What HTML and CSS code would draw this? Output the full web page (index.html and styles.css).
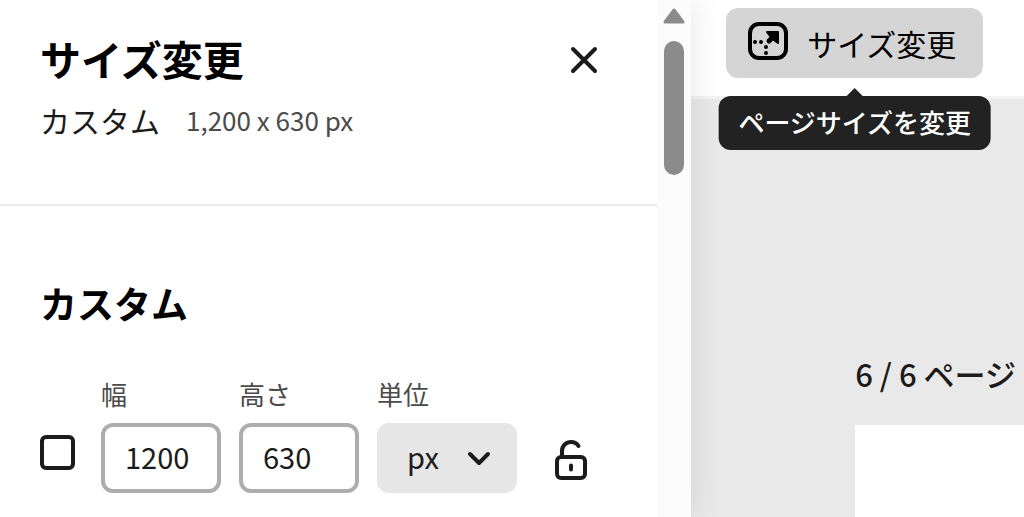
FILE: index.html
```html
<!DOCTYPE html>
<html lang="ja">
<head>
<meta charset="UTF-8" />
<meta name="viewport" content="width=device-width, initial-scale=1" />
<title>サイズ変更</title>
<link rel="stylesheet" href="styles.css">
</head>
<body>

<div class="app">

  <!-- Resize panel -->
  <aside class="panel">
    <div class="panel-content">
      <header class="panel-header">
        <div>
          <h1>サイズ変更</h1>
          <p class="current"><span>カスタム</span><span class="dims">1,200 x 630 px</span></p>
        </div>
        <button class="icon-btn" type="button" aria-label="閉じる">
          <svg width="28" height="28" viewBox="0 0 28 28" fill="none" stroke="#1b1b1b" stroke-width="4" stroke-linecap="round"><path d="M3 3L25 25M25 3L3 25"/></svg>
        </button>
      </header>

      <form class="custom">
        <h2>カスタム</h2>
        <div class="fields">
          <input class="check" type="checkbox" aria-label="カスタム" />
          <div class="field">
            <label for="width">幅</label>
            <input id="width" type="text" value="1200" />
          </div>
          <div class="field">
            <label for="height">高さ</label>
            <input id="height" type="text" value="630" />
          </div>
          <div class="field unit">
            <label for="unit">単位</label>
            <select id="unit"><option>px</option></select>
            <svg class="chevron" width="24" height="16" viewBox="0 0 24 16" fill="none" stroke="#1b1b1b" stroke-width="4" stroke-linecap="round" stroke-linejoin="round"><path d="M3 3L12 12L21 3"/></svg>
          </div>
          <button class="icon-btn lock" type="button" aria-label="縦横比を固定">
            <svg width="32" height="40" viewBox="0 0 32 40" fill="none" stroke="#1b1b1b" stroke-width="4" stroke-linecap="round"><rect x="2" y="17" width="28" height="21" rx="4"/><path d="M7 17V11C7 5.500 11 2 16 2C19.500 2 22 3.500 23.500 6M16 25.500V29.500"/></svg>
          </button>
        </div>
      </form>
    </div>

    <div class="scrollbar">
      <svg width="22" height="16" viewBox="0 0 22 16"><path d="M11 2L20 14H2Z" fill="#8b8b8b" stroke="#8b8b8b" stroke-width="3" stroke-linejoin="round"/></svg>
      <div class="thumb"></div>
    </div>
  </aside>

  <!-- Editor -->
  <main class="editor">
    <div class="toolbar">
      <div class="tool">
        <button class="resize-btn" type="button" aria-describedby="tip">
          <svg width="40" height="38" viewBox="0 0 40 38" fill="none" stroke="#000" stroke-width="4"><rect x="2" y="2" width="36" height="34" rx="9"/><path d="M27 13L21 19" stroke-width="5" stroke-linecap="round"/><path d="M19 10H30V21L26 18L22 14Z" fill="#000" stroke-width="2" stroke-linejoin="round"/><g fill="#000" stroke="none"><circle cx="7" cy="20" r="2"/><circle cx="13" cy="20" r="2"/><circle cx="18" cy="25" r="2"/><circle cx="18" cy="31" r="2"/></g></svg>
          <span>サイズ変更</span>
        </button>
        <div class="tooltip" id="tip" role="tooltip">ページサイズを変更</div>
      </div>
    </div>
    <div class="canvas">
      <p class="page-label">6 / 6 ページ</p>
      <div class="page"></div>
    </div>
  </main>

</div>

</body>
</html>
```
FILE: styles.css
```css
* {
  box-sizing: border-box;
}
body {
  margin: 0;
  font-family: "Noto Sans CJK JP", sans-serif;
  color: #1b1b1b;
  background: #fff;
}
h1, h2, p {
  margin: 0;
}
button, input, select {
  font: inherit;
  color: inherit;
}
button {
  border: none;
  cursor: pointer;
}
svg {
  display: block;
}
.app {
  display: grid;
  grid-template-columns: 27fr 13fr;
  min-height: 100vh;
}

/* Panel */
.panel {
  display: flex;
  position: relative;
  z-index: 1;
  background: #fff;
  box-shadow: 0 0 32px rgba(0, 0, 0, 0.1);
}
.panel-content {
  flex: 1;
}
.panel-header {
  display: flex;
  justify-content: space-between;
  align-items: flex-start;
  padding: 33px 53px 64px 40px;
  border-bottom: 2px solid #e9e9e9;
}
h1 {
  font-size: 41px;
  line-height: 50px;
  font-weight: 700;
  color: #000;
}
.current {
  display: flex;
  align-items: center;
  gap: 26px;
  margin-top: 17px;
  font-size: 30px;
  line-height: 40px;
}
.dims {
  font-size: 26px;
  color: #4b4b4b;
}
.icon-btn {
  padding: 6px;
  background: none;
}
.panel-header .icon-btn {
  margin-top: 7px;
}
.custom {
  padding: 71px 40px 24px;
}
h2 {
  font-size: 37px;
  line-height: 52px;
  font-weight: 700;
  color: #000;
}
.fields {
  display: flex;
  align-items: flex-end;
  gap: 18px;
  margin-top: 47px;
}
.field {
  width: 120px;
}
.field label {
  display: block;
  margin-bottom: 11px;
  font-size: 26px;
  line-height: 36px;
  color: #4b4b4b;
}
.field input, .field select {
  display: block;
  width: 100%;
  height: 70px;
  border-radius: 12px;
  font-size: 29px;
}
.field input {
  padding: 0 20px 5px;
  border: 4px solid #adadad;
  background: #fff;
}
.unit {
  position: relative;
  width: 140px;
}
.field select {
  appearance: none;
  padding: 0 30px 4px;
  border: none;
  background: #e6e6e6;
}
.chevron {
  position: absolute;
  right: 26px;
  bottom: 26px;
  pointer-events: none;
}
.check {
  appearance: none;
  width: 35px;
  height: 35px;
  margin: 0 8px 23px 0;
  border: 4px solid #1b1b1b;
  border-radius: 6px;
}
.lock {
  margin: 0 0 7px 14px;
}

/* Scrollbar */
.scrollbar {
  display: flex;
  flex-direction: column;
  align-items: center;
  gap: 17px;
  width: 34px;
  padding-top: 8px;
  background: #fcfcfc;
}
.thumb {
  width: 20px;
  height: 134px;
  border-radius: 10px;
  background: #8b8b8b;
}

/* Editor */
.editor {
  display: flex;
  flex-direction: column;
  background: #e9e9e9;
}
.toolbar {
  padding: 8px 35px 18px;
  background: #fff;
  border-bottom: 3px solid #f3f3f3;
}
.tool {
  position: relative;
  width: max-content;
}
.resize-btn {
  display: flex;
  align-items: center;
  gap: 18px;
  height: 70px;
  padding: 0 26px 4px 22px;
  border-radius: 12px;
  background: #d5d5d5;
  color: #000;
  font-size: 30px;
}
.resize-btn span {
  padding: 3px 1px 0;
}
.tooltip {
  position: absolute;
  top: 88px;
  left: 50%;
  transform: translateX(-50%);
  padding: 8px 20px 10px;
  border-radius: 12px;
  background: #222;
  color: #fff;
  font-size: 26px;
  line-height: 36px;
  font-weight: 500;
  white-space: nowrap;
}
.tooltip::before {
  content: "";
  position: absolute;
  bottom: 100%;
  left: 50%;
  margin-left: -8px;
  border: 8px solid transparent;
  border-top: none;
  border-bottom-color: #222;
}
.canvas {
  flex: 1;
  display: flex;
  flex-direction: column;
  padding: 255px 0 0 164px;
}
.page-label {
  font-size: 31px;
  line-height: 40px;
  font-weight: 500;
  white-space: nowrap;
}
.page {
  flex: 1;
  margin-top: 31px;
  background: #fff;
}
```
